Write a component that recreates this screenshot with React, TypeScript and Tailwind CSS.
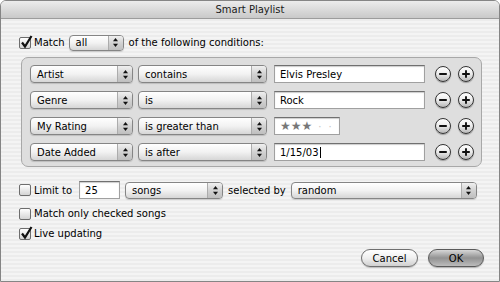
import React from "react";

const font = "font-['DejaVu_Sans',sans-serif]";

function Arrows() {
  return (
    <svg width="7" height="11" viewBox="0 0 7 11">
      <path d="M3.5 1 L6 4.2 L1 4.2 Z" fill="#111" />
      <path d="M3.5 10 L6 6.8 L1 6.8 Z" fill="#111" />
    </svg>
  );
}

function Popup({ label, className }: { label: string; className: string }) {
  return (
    <div
      className={`flex rounded-[4px] border border-[#858585] bg-gradient-to-b from-white via-[#f2f2f2] to-[#d6d6d6] shadow-[0_1px_1px_rgba(0,0,0,0.15)] overflow-hidden ${className}`}
    >
      <div className="flex-1 flex items-center pl-[6px] text-[10px] text-black whitespace-nowrap">{label}</div>
      <div className="w-[15px] flex items-center justify-center border-l border-[#acacac] bg-gradient-to-b from-[#f0f0f0] via-[#d2d2d2] to-[#bfbfbf]">
        <Arrows />
      </div>
    </div>
  );
}

function Field({ children, className }: { children: React.ReactNode; className: string }) {
  return (
    <div
      className={`flex items-center pl-[5px] bg-white border border-[#a0a0a0] border-t-[#707070] shadow-[inset_0_1px_1px_rgba(0,0,0,0.2)] text-[10px] text-black ${className}`}
    >
      {children}
    </div>
  );
}

function Round({ plus }: { plus?: boolean }) {
  return (
    <div className="w-[16px] h-[16px] rounded-full border border-[#333] bg-gradient-to-b from-white via-[#ececec] to-[#b8b8b8] flex items-center justify-center shadow-[0_1px_1px_rgba(0,0,0,0.3)]">
      <svg width="10" height="10" viewBox="0 0 10 10">
        <path d="M1.2 5 H8.8" stroke="#111" strokeWidth="1.9" />
        {plus && <path d="M5 1.2 V8.8" stroke="#111" strokeWidth="1.9" />}
      </svg>
    </div>
  );
}

function Check({ on }: { on?: boolean }) {
  return (
    <div className="relative w-[12px] h-[12px] shrink-0 rounded-[2px] border border-[#6d6d6d] bg-gradient-to-b from-white to-[#d4d4d4]">
      {on && (
        <svg className="absolute left-[0px] top-[-3px]" width="13" height="14" viewBox="0 0 13 14">
          <path d="M2 7.5 L5 11.5 L11.5 1" fill="none" stroke="#111" strokeWidth="2.2" />
        </svg>
      )}
    </div>
  );
}

const rules = [
  { field: "Artist", op: "contains", value: "Elvis Presley" },
  { field: "Genre", op: "is", value: "Rock" },
  { field: "My Rating", op: "is greater than", value: "" },
  { field: "Date Added", op: "is after", value: "1/15/03" },
];

export default function App() {
  return (
    <div className={`w-[500px] h-[282px] bg-white ${font}`}>
      <div className="h-full flex flex-col border border-[#858585] rounded-t-[6px] overflow-hidden">
        <div className="h-[18px] shrink-0 flex items-center justify-center border-b border-[#9c9c9c] bg-gradient-to-b from-[#ececec] to-[#c9c9c9] text-[10px] text-[#1a1a1a]">
          Smart Playlist
        </div>
        <div className="flex-1 flex flex-col pl-[18px] pr-[15px] bg-[repeating-linear-gradient(0deg,#ececec_0px,#ececec_2px,#f4f4f4_2px,#f4f4f4_4px)]">
          <div className="mt-[15px] h-[17px] flex items-center text-[10px] text-black">
            <Check on />
            <span className="ml-[3px]">Match</span>
            <Popup label="all" className="ml-[4px] w-[55px] h-[16px]" />
            <span className="ml-[5px]">of the following conditions:</span>
          </div>

          <div className="mt-[6px] ml-[2px] w-[461px] h-[110px] rounded-[7px] border border-[#a8a8a8] bg-[#dedede] pt-[7px] pl-[8px] flex flex-col gap-[8px]">
            {rules.map((r) => (
              <div key={r.field} className="h-[18px] flex items-center">
                <Popup label={r.field} className="w-[103px] h-[18px]" />
                <Popup label={r.op} className="ml-[5px] w-[129px] h-[18px]" />
                {r.value === "" ? (
                  <Field className="ml-[7px] w-[66px] h-[18px]">
                    <span className="text-[12px] leading-none text-[#777]">★★★</span>
                    <span className="ml-[6px] text-[10px] text-[#c4c4c4]">·</span>
                    <span className="ml-[7px] text-[10px] text-[#c4c4c4]">·</span>
                  </Field>
                ) : (
                  <Field
                    className={
                      r.field === "Date Added"
                        ? "ml-[7px] w-[151px] h-[18px] border-[#7a7a7a]"
                        : "ml-[7px] w-[151px] h-[18px]"
                    }
                  >
                    {r.value}
                    {r.field === "Date Added" && <span className="ml-[1px] w-px h-[11px] bg-black" />}
                  </Field>
                )}
                {r.value === "" && <div className="w-[85px]" />}
                <div className="ml-[10px] flex gap-[7px]">
                  <Round />
                  <Round plus />
                </div>
              </div>
            ))}
          </div>

          <div className="mt-[14px] h-[18px] flex items-center text-[10px] text-black">
            <Check />
            <span className="ml-[3px]">Limit to</span>
            <Field className="ml-[7px] w-[41px] h-[18px]">25</Field>
            <Popup label="songs" className="ml-[5px] w-[98px] h-[17px]" />
            <span className="ml-[5px]">selected by</span>
            <Popup label="random" className="ml-[5px] w-[186px] h-[17px]" />
          </div>

          <div className="mt-[8px] h-[13px] flex items-center text-[10px] text-black">
            <Check />
            <span className="ml-[3px]">Match only checked songs</span>
          </div>

          <div className="mt-[7px] h-[13px] flex items-center text-[10px] text-black">
            <Check on />
            <span className="ml-[3px]">Live updating</span>
          </div>

          <div className="mt-[9px] flex justify-end gap-[10px] text-[10px] text-black">
            <div className="w-[57px] h-[18px] rounded-full border border-[#6f6f6f] bg-gradient-to-b from-white via-[#efefef] to-[#d0d0d0] flex items-center justify-center shadow-[0_1px_1px_rgba(0,0,0,0.2)]">
              Cancel
            </div>
            <div className="w-[56px] h-[18px] rounded-full border border-[#5a5a5a] bg-gradient-to-b from-[#d8d8d8] via-[#929292] to-[#bcbcbc] flex items-center justify-center shadow-[0_1px_1px_rgba(0,0,0,0.25)]">
              OK
            </div>
          </div>
        </div>
      </div>
    </div>
  );
}
